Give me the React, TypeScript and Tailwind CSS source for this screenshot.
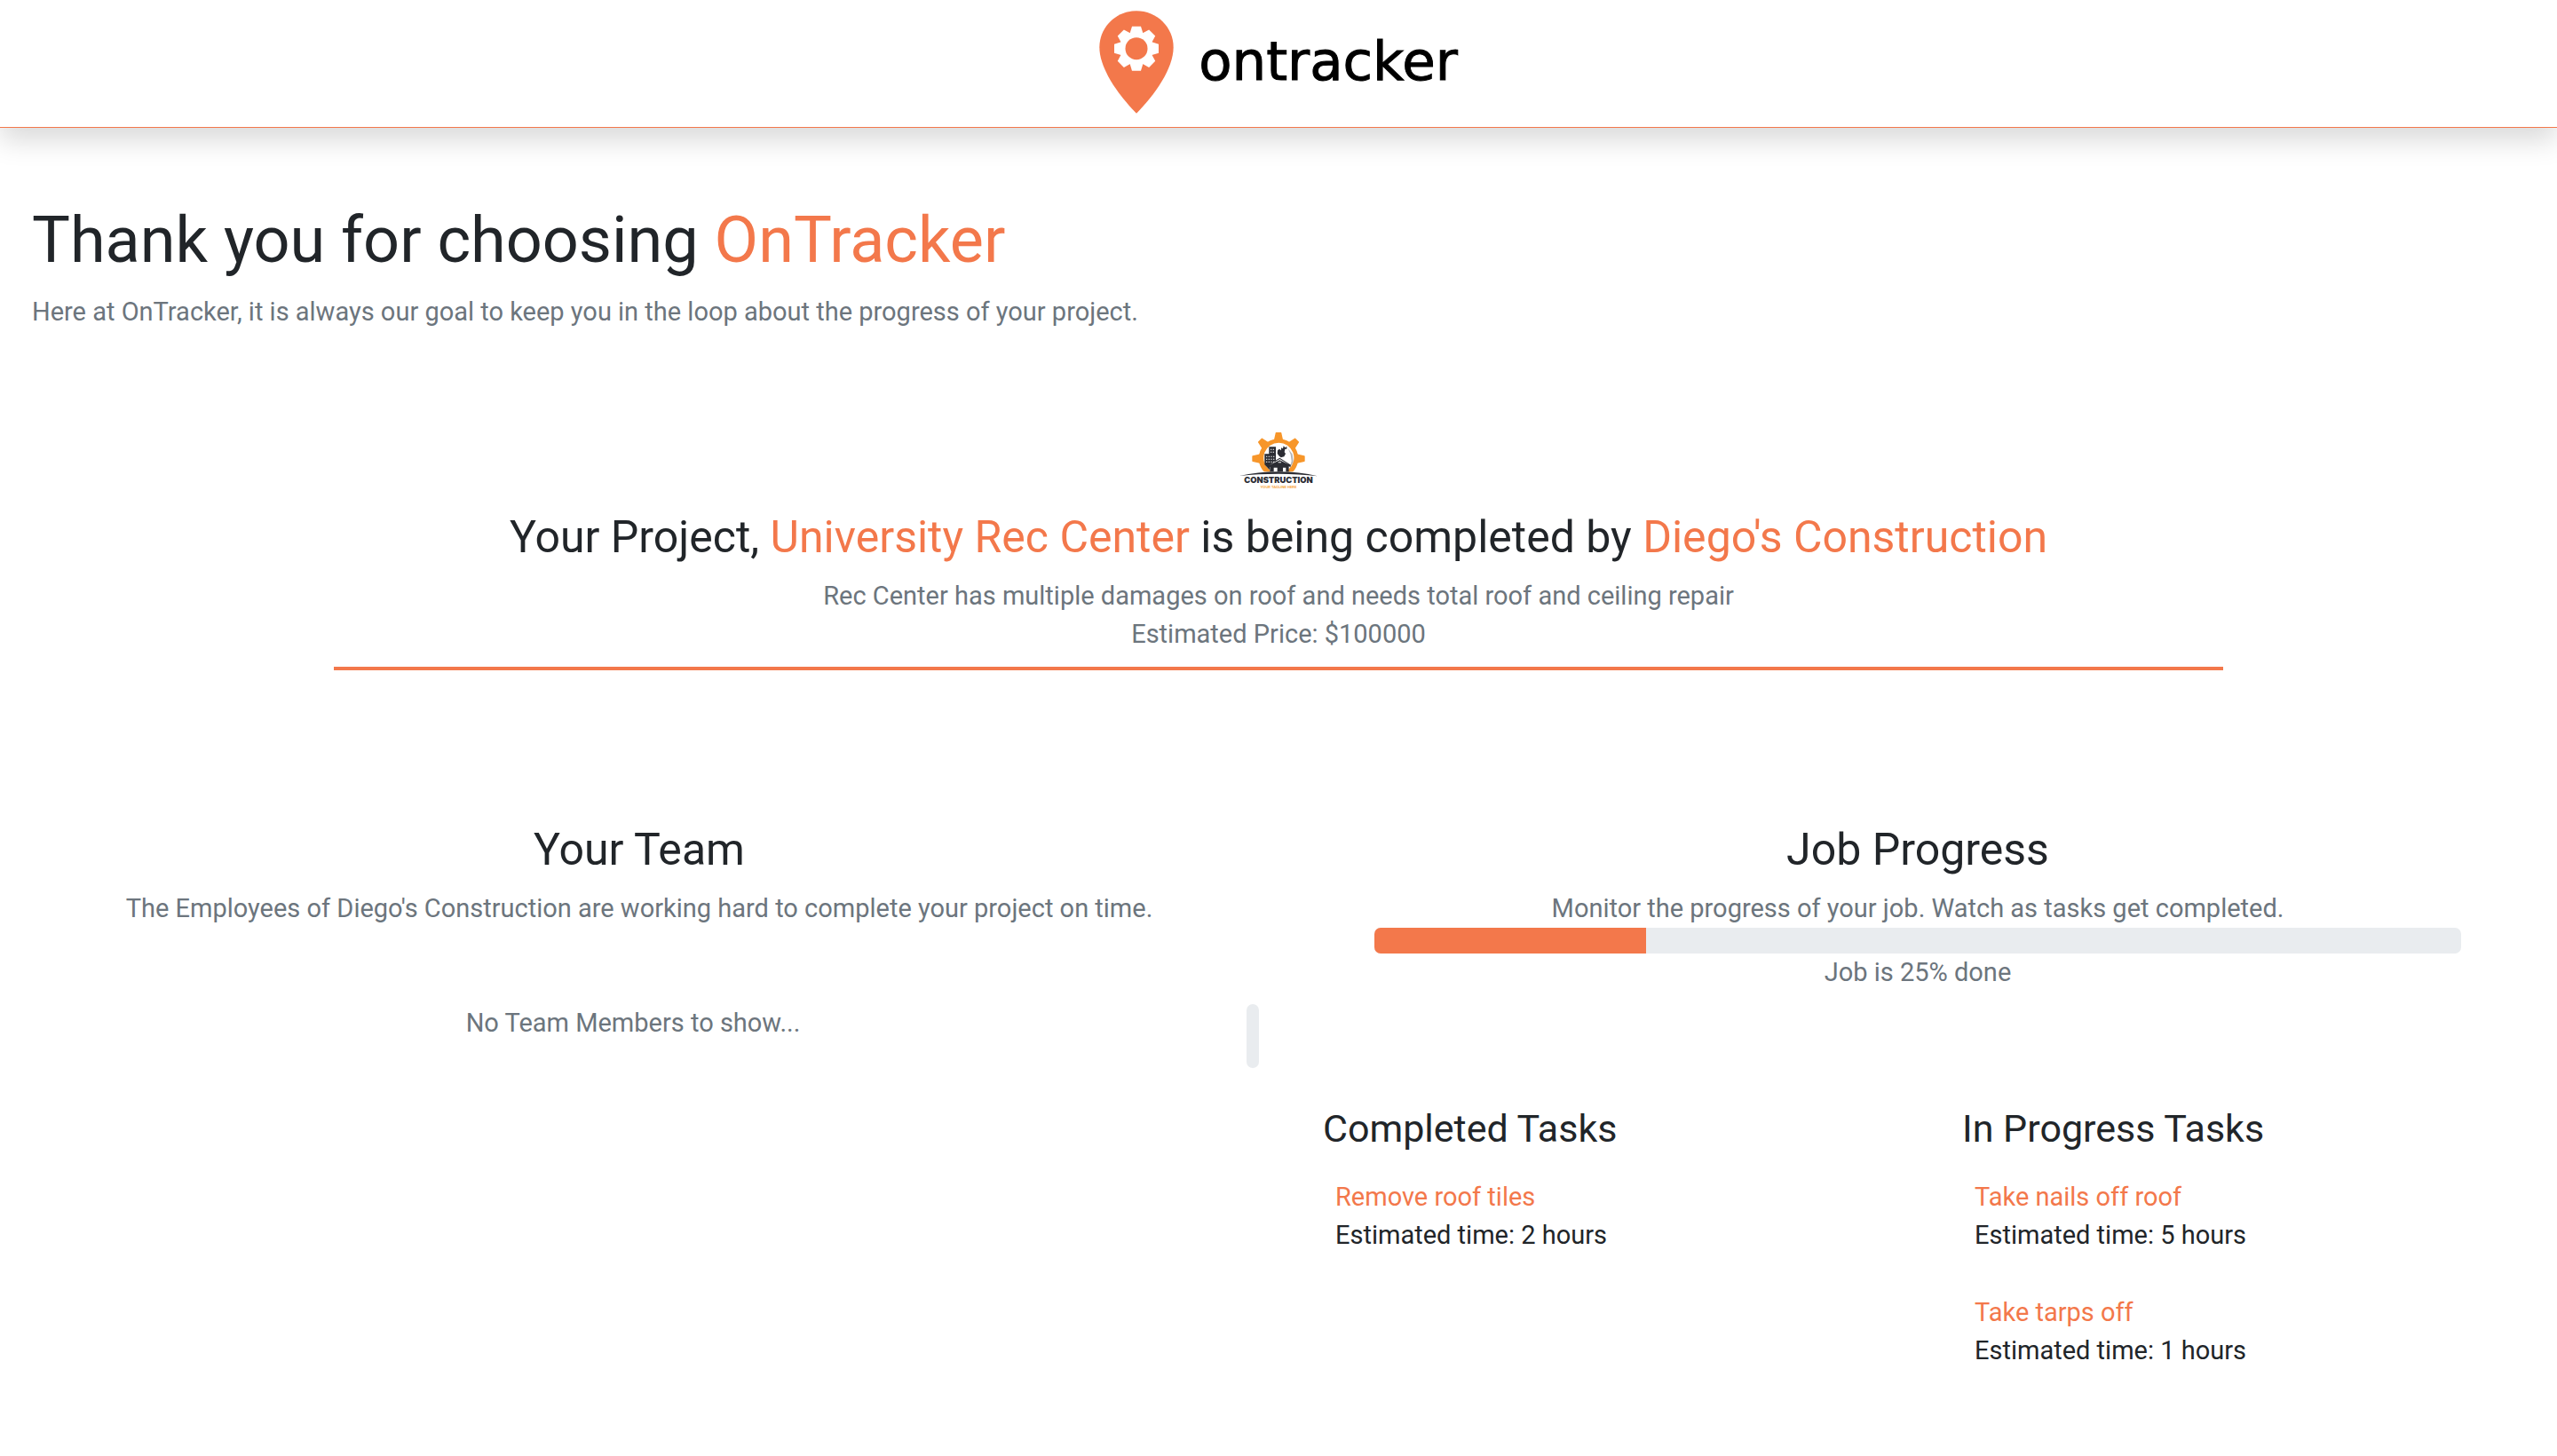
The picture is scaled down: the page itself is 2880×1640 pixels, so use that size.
import type { ReactNode } from "react";

type Task = { name: string; hours: number };

const completed: Task[] = [{ name: "Remove roof tiles", hours: 2 }];
const inProgress: Task[] = [
  { name: "Take nails off roof", hours: 5 },
  { name: "Take tarps off", hours: 1 },
];
const percentDone = 25;

function PinLogo() {
  return (
    <svg viewBox="111 36 252 348" className="h-[116px] w-[84px]" aria-hidden="true">
      <path
        fill="#f3784b"
        d="M237 37C168 37 112 92 112 160C112 232 176 322 237 383C298 322 362 232 362 160C362 92 306 37 237 37Z"
      />
      <g fill="#fff">
        {[0, 45, 90, 135, 180, 225, 270, 315].map((angle) => (
          <path key={angle} d="M222 89H252L259 112V128H215V112Z" transform={`rotate(${angle} 237 164)`} />
        ))}
        <circle cx="237" cy="164" r="56" />
      </g>
      <circle cx="237" cy="164" r="37.500" fill="#f3784b" />
    </svg>
  );
}

function ConstructionLogo() {
  return (
    <svg viewBox="0 0 360 270" className="h-[90px] w-[120px]" role="img" aria-label="Diego's Construction logo">
      <g fill="#f7962a">
        {[-90, -45, 0, 45, 90].map((angle) => (
          <path key={angle} d="M170 53Q170 51 172 51H188Q190 51 190 53L196 80H164Z" transform={`rotate(${angle} 180 140)`} />
        ))}
        <path
          fillRule="evenodd"
          d="M180 73A66 66 0 0 1 229 184H131A66 66 0 0 1 180 73ZM181 86A51 51 0 0 0 148 176L155 184H207L214 176A51 51 0 0 0 181 86Z"
        />
      </g>
      <g fill="#2b2c33">
        <path d="M133 124H148V100H171V146L150 160V178L133 160Z" />
        <path d="M177 112L183 107L189 112V103L195 106L197 97L203 103L208 98V107H202L200 118L204 123L199 133L188 136L181 130L176 122Z" />
        <path d="M143 163L184 137L222 161L220 168L215 166V184H205V170H195V184H176V170H164V184H151V168L146 170Z" />
        <path d="M212 105L227 125L230 150L218 174L224 148L221 126Z" fillOpacity=".35" />
        <path d="M48 198Q110 184 180 184Q250 184 312 199Q250 191 180 191Q110 191 48 198Z" />
      </g>
      <g fill="#fff">
        {[107, 116].map((y) => (
          <path key={y} d={`M153 ${y}h4v3h-4zM161 ${y}h4v3h-4z`} />
        ))}
        {[131, 140, 149].map((y) => (
          <path key={y} d={`M138 ${y}h4v3h-4zM146 ${y}h4v3h-4zM154 ${y}h4v3h-4zM162 ${y}h4v3h-4z`} />
        ))}
        <path d="M179 151h10v3h-10zM150 161L184 141L215 160L184 145Z" />
      </g>
      <text x="180" y="223" textAnchor="middle" fontFamily="Inter, sans-serif" fontWeight="900" fontSize="28" fill="#2b2c33">
        CONSTRUCTION
      </text>
      <text x="180" y="239" textAnchor="middle" fontFamily="Inter, sans-serif" fontWeight="700" fontSize="12" fill="#f7a646">
        YOUR TAGLINE HERE
      </text>
    </svg>
  );
}

function Accent({ children }: { children: ReactNode }) {
  return <span className="text-[#f3784b]">{children}</span>;
}

function SectionTitle({ children }: { children: ReactNode }) {
  return <h2 className="mb-[15px] text-[50px] leading-[60px]">{children}</h2>;
}

function TaskList({ title, tasks }: { title: string; tasks: Task[] }) {
  return (
    <section className="pl-[50px]">
      <h3 className="mb-[30px] text-[43px] leading-[52px]">{title}</h3>
      <ul className="flex flex-col gap-11 pl-[14px]">
        {tasks.map((task) => (
          <li key={task.name}>
            <p className="text-[#f3784b]">{task.name}</p>
            <p>Estimated time: {task.hours} hours</p>
          </li>
        ))}
      </ul>
    </section>
  );
}

export default function App() {
  return (
    <div className="bg-white pb-20 font-['Roboto',sans-serif] text-[29px] leading-[43px] text-[#212529]">
      <header className="flex items-start justify-center gap-7 border-b border-[#f3784b] pt-3 pb-[15px] shadow-[0_14px_29px_rgba(0,0,0,0.15)]">
        <PinLogo />
        <span className="pt-[21px] font-['DejaVu_Sans',sans-serif] text-[61px] leading-[72px] text-black [-webkit-text-stroke:1px_black]">
          ontracker
        </span>
      </header>

      <main>
        <section className="px-9 pt-[84px]">
          <h1 className="mb-4 text-[72px] leading-[86px]">
            Thank you for choosing <Accent>OnTracker</Accent>
          </h1>
          <p className="text-[#6c757d]">
            Here at OnTracker, it is always our goal to keep you in the loop about the progress of your project.
          </p>
        </section>

        <section className="mx-auto flex max-w-[2128px] flex-col items-center border-b-4 border-[#f3784b] pt-[97px] pb-[15px] text-center">
          <div className="mb-[15px]">
            <ConstructionLogo />
          </div>
          <SectionTitle>
            Your Project, <Accent>University Rec Center</Accent> is being completed by <Accent>Diego's Construction</Accent>
          </SectionTitle>
          <p className="text-[#6c757d]">Rec Center has multiple damages on roof and needs total roof and ceiling repair</p>
          <p className="text-[#6c757d]">Estimated Price: $100000</p>
        </section>

        <div className="grid grid-cols-2 pt-[172px]">
          <section className="text-center text-[#6c757d]">
            <div className="text-[#212529]">
              <SectionTitle>Your Team</SectionTitle>
            </div>
            <p>The Employees of Diego's Construction are working hard to complete your project on time.</p>
            <div className="mt-[86px] flex px-[22px]">
              <p className="flex-1">No Team Members to show...</p>
              <div className="h-[72px] w-[14px] rounded-[7px] bg-[#e9ecef]" />
            </div>
          </section>

          <section>
            <div className="text-center">
              <SectionTitle>Job Progress</SectionTitle>
              <p className="text-[#6c757d]">Monitor the progress of your job. Watch as tasks get completed.</p>
              <div
                role="progressbar"
                aria-label="Job progress"
                aria-valuenow={percentDone}
                aria-valuemin={0}
                aria-valuemax={100}
                className="mx-auto h-[29px] w-[85%] overflow-hidden rounded-[7px] bg-[#e9ecef]"
              >
                <div className="h-full bg-[#f3784b]" style={{ width: `${percentDone}%` }} />
              </div>
              <p className="text-[#6c757d]">Job is {percentDone}% done</p>
            </div>
            <div className="mt-32 grid grid-cols-2">
              <TaskList title="Completed Tasks" tasks={completed} />
              <TaskList title="In Progress Tasks" tasks={inProgress} />
            </div>
          </section>
        </div>
      </main>
    </div>
  );
}
